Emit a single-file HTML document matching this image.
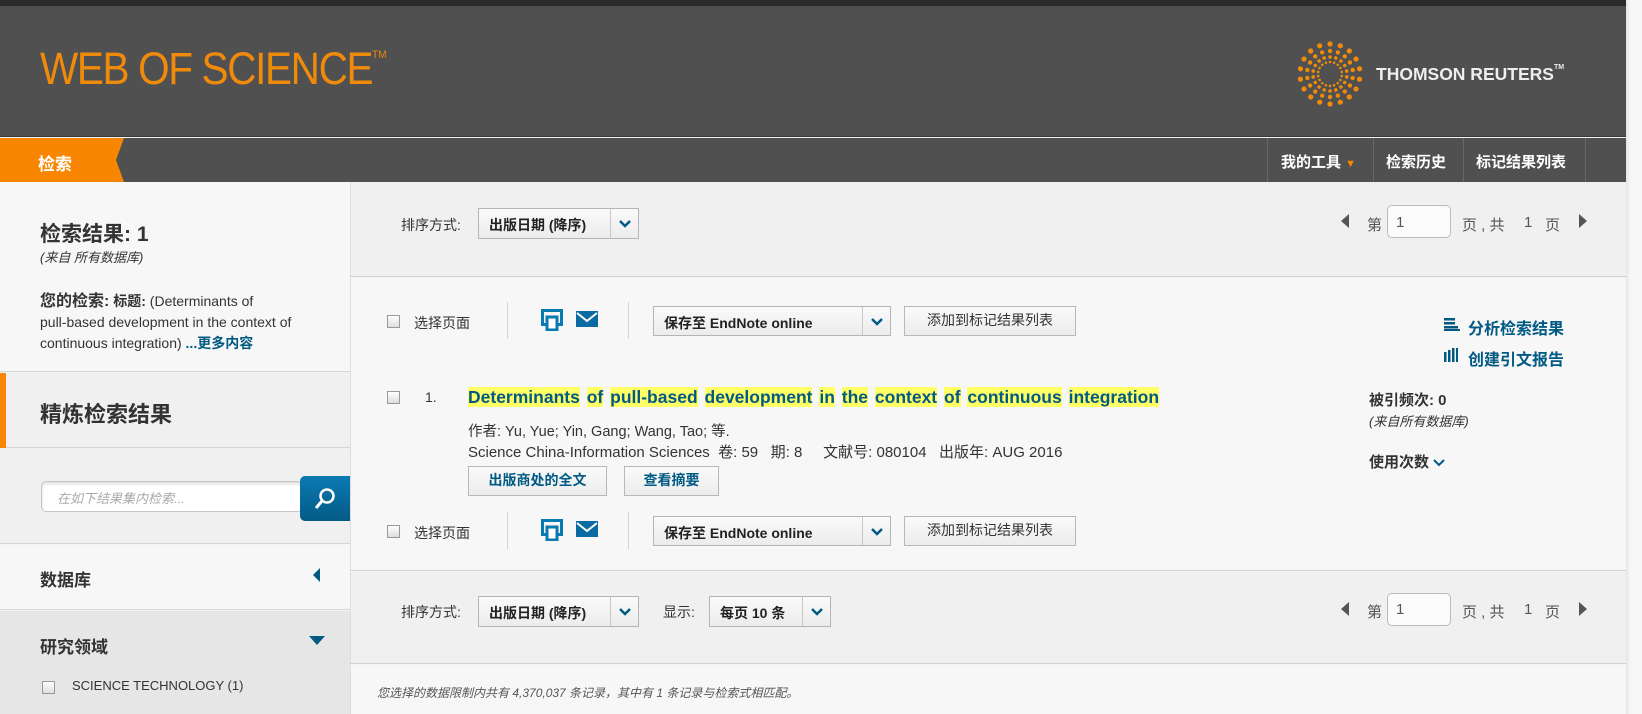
<!DOCTYPE html>
<html><head><meta charset="utf-8"><style>
*{margin:0;padding:0;box-sizing:border-box}
body{width:1642px;height:714px;overflow:hidden;background:#f3f3f3;font-family:"Liberation Sans","Noto Sans CJK SC",sans-serif;color:#333;position:relative;font-size:14px}
.a{position:absolute;white-space:nowrap}
.blue{color:#005a84}
.sel{position:absolute;border:1px solid #b5b5b5;background:linear-gradient(#fafafa,#ececec);font-weight:bold;font-size:14px;color:#222}
.sel .t{position:absolute;left:10px;top:6px}
.sel .d{position:absolute;right:0;top:0;bottom:0;width:28px;border-left:1px solid #c8c8c8}
.btn{position:absolute;border:1px solid #b8b8b8;background:linear-gradient(#fafafa,#ececec);font-size:14px;text-align:center;line-height:27px}
.cb{position:absolute;width:13px;height:13px;border:1px solid #999;background:linear-gradient(#fff,#ddd)}
.vs{position:absolute;width:1px;background:#d4d4d4}
.pg{position:absolute;font-size:15px;color:#555}
</style></head><body>
<div class="a" style="left:0;top:0;width:1626px;height:6px;background:#2b2b2b"></div>
<div class="a" style="left:0;top:6px;width:1626px;height:131px;background:#505050;border-bottom:1px solid #3a3a3a"></div>
<div class="a" style="left:40px;top:43px;font-size:45px;color:#f08a0b;letter-spacing:-1.5px;font-weight:300;transform:scaleX(0.9);transform-origin:left">WEB OF SCIENCE<span style="font-size:11px;vertical-align:top;position:relative;top:6px;letter-spacing:0">TM</span></div>
<svg class="a" style="left:1297px;top:41px" width="66" height="66" viewBox="-33 -33 66 66">
<g fill="#f08a0b">
<g id="r1"><circle cx="0" cy="-30" r="2.6"/><circle cx="0" cy="-23" r="2.2"/><circle cx="0" cy="-17" r="1.8"/><circle cx="0" cy="-12" r="1.3"/></g>
<use href="#r1" transform="rotate(20)"/><use href="#r1" transform="rotate(40)"/><use href="#r1" transform="rotate(60)"/><use href="#r1" transform="rotate(80)"/><use href="#r1" transform="rotate(100)"/><use href="#r1" transform="rotate(120)"/><use href="#r1" transform="rotate(140)"/><use href="#r1" transform="rotate(160)"/><use href="#r1" transform="rotate(180)"/><use href="#r1" transform="rotate(200)"/><use href="#r1" transform="rotate(220)"/><use href="#r1" transform="rotate(240)"/><use href="#r1" transform="rotate(260)"/><use href="#r1" transform="rotate(280)"/><use href="#r1" transform="rotate(300)"/><use href="#r1" transform="rotate(320)"/><use href="#r1" transform="rotate(340)"/>
</g></svg>
<div class="a" style="left:1376px;top:64px;font-size:17.5px;font-weight:bold;color:#eee">THOMSON REUTERS<span style="font-size:7px;vertical-align:top">TM</span></div>
<div class="a" style="left:0;top:138px;width:1626px;height:44px;background:#505050"></div>
<svg class="a" style="left:0;top:138px" width="130" height="44"><polygon points="0,0 124,0 116,22 124,44 0,44" fill="#f98600"/></svg>
<div class="a" style="left:38px;top:150px;font-size:17px;font-weight:bold;color:#fff">检索</div>
<div class="vs" style="left:1267px;top:138px;height:44px;background:#666"></div>
<div class="vs" style="left:1373px;top:138px;height:44px;background:#666"></div>
<div class="vs" style="left:1463px;top:138px;height:44px;background:#666"></div>
<div class="vs" style="left:1585px;top:138px;height:44px;background:#666"></div>
<div class="a" style="left:1281px;top:151px;font-size:15px;font-weight:bold;color:#fff">我的工具 <span style="color:#f98600;font-size:11px">▼</span></div>
<div class="a" style="left:1386px;top:151px;font-size:15px;font-weight:bold;color:#fff">检索历史</div>
<div class="a" style="left:1476px;top:151px;font-size:15px;font-weight:bold;color:#fff">标记结果列表</div>
<div class="a" style="left:0;top:182px;width:350px;height:190px;background:#f7f7f7;border-bottom:1px solid #d6d6d6"></div>
<div class="a" style="left:40px;top:218px;font-size:21px;font-weight:bold;color:#333">检索结果: 1</div>
<div class="a" style="left:40px;top:247px;font-size:13px;font-style:italic">(来自 所有数据库)</div>
<div class="a" style="left:40px;top:291px;font-size:14px;line-height:21px"><b style="font-size:16px">您的检索:</b> <b>标题:</b> (Determinants of<br>pull-based development in the context of<br>continuous integration) <b class="blue">...更多内容</b></div>
<div class="a" style="left:0;top:373px;width:350px;height:75px;background:#f0f0f0;border-bottom:1px solid #d6d6d6"></div>
<div class="a" style="left:0;top:373px;width:6px;height:75px;background:#f98600"></div>
<div class="a" style="left:40px;top:397px;font-size:22px;font-weight:bold">精炼检索结果</div>
<div class="a" style="left:0;top:449px;width:350px;height:95px;background:#f0f0f0;border-bottom:1px solid #d6d6d6"></div>
<div class="a" style="left:41px;top:481px;width:262px;height:31px;border:1px solid #c5c5c5;border-radius:5px;background:#fff;box-shadow:inset 0 2px 3px #ddd"></div>
<div class="a" style="left:57px;top:488px;font-size:13px;font-style:italic;color:#aaa">在如下结果集内检索...</div>
<div class="a" style="left:300px;top:476px;width:50px;height:45px;border-radius:5px 0 0 5px;background:linear-gradient(#0a7ab2,#045a86)"></div>
<svg class="a" style="left:312px;top:486px" width="26" height="26"><circle cx="15" cy="10" r="6.5" fill="none" stroke="#fff" stroke-width="2.5"/><line x1="10" y1="15" x2="4" y2="22" stroke="#fff" stroke-width="3"/></svg>
<div class="a" style="left:0;top:545px;width:350px;height:65px;background:#f7f7f7;border-bottom:1px solid #d6d6d6"></div>
<div class="a" style="left:40px;top:566px;font-size:17px;font-weight:bold">数据库</div>
<svg class="a" style="left:313px;top:568px" width="8" height="14"><polygon points="7,0 7,14 0,7" fill="#005a84"/></svg>
<div class="a" style="left:0;top:611px;width:350px;height:103px;background:#e6e6e6"></div>
<div class="a" style="left:40px;top:633px;font-size:17px;font-weight:bold">研究领域</div>
<svg class="a" style="left:309px;top:636px" width="16" height="10"><polygon points="0,0 16,0 8,9" fill="#005a84"/></svg>
<div class="cb" style="left:42px;top:681px"></div>
<div class="a" style="left:72px;top:678px;font-size:13px">SCIENCE TECHNOLOGY (1)</div>
<div class="a" style="left:350px;top:182px;width:1276px;height:95px;background:#f0f0f0;border-bottom:1px solid #d0d0d0;border-left:1px solid #ddd"></div>
<div class="a" style="left:401px;top:215px;font-size:14px">排序方式:</div>
<div class="sel" style="left:478px;top:208px;width:161px;height:31px"><span class="t">出版日期 (降序)</span><span class="d"><svg width="28" height="29"><polyline points="9,12 14,17 19,12" fill="none" stroke="#005a84" stroke-width="2.5"/></svg></span></div>
<svg class="a" style="left:1341px;top:214px" width="9" height="14"><polygon points="8,0 8,14 0,7" fill="#555"/></svg>
<div class="pg" style="left:1367px;top:214px">第</div>
<div class="a" style="left:1387px;top:205px;width:64px;height:33px;border:1px solid #bbb;border-radius:5px;background:#fbfbfb"></div>
<div class="pg" style="left:1396px;top:214px">1</div>
<div class="pg" style="left:1462px;top:214px">页 , 共</div>
<div class="pg" style="left:1524px;top:214px">1</div>
<div class="pg" style="left:1545px;top:214px">页</div>
<svg class="a" style="left:1579px;top:214px" width="9" height="14"><polygon points="0,0 0,14 8,7" fill="#555"/></svg>
<div class="a" style="left:350px;top:278px;width:1276px;height:293px;background:#f7f7f7;border-bottom:1px solid #d0d0d0;border-left:1px solid #ddd"></div>
<div class="cb" style="left:387px;top:315px"></div>
<div class="a" style="left:414px;top:313px;font-size:14px">选择页面</div>
<div class="vs" style="left:507px;top:302px;height:37px"></div>
<svg class="a" style="left:541px;top:309px" width="22" height="22"><rect x="1.5" y="1.5" width="19" height="14" fill="none" stroke="#0a7ab2" stroke-width="3"/><rect x="6" y="8" width="10" height="13" fill="#fff" stroke="#0a7ab2" stroke-width="3"/><rect x="15" y="3" width="3" height="2" fill="#fff"/></svg>
<svg class="a" style="left:576px;top:311px" width="22" height="18"><rect width="22" height="16" fill="#0a6ba3"/><polyline points="1,2 11,10 21,2" fill="none" stroke="#fff" stroke-width="2"/></svg>
<div class="vs" style="left:628px;top:302px;height:37px"></div>
<div class="sel" style="left:653px;top:306px;width:238px;height:30px"><span class="t">保存至 EndNote online</span><span class="d"><svg width="28" height="28"><polyline points="9,12 14,17 19,12" fill="none" stroke="#005a84" stroke-width="2.5"/></svg></span></div>
<div class="btn" style="left:904px;top:306px;width:172px;height:30px">添加到标记结果列表</div>
<svg class="a" style="left:1444px;top:318px" width="16" height="13"><rect y="0" width="11" height="2.5" fill="#005a84"/><rect y="4" width="11" height="2.5" fill="#005a84"/><rect y="8" width="14" height="2.5" fill="#005a84"/><rect y="11" width="16" height="2" fill="#005a84"/></svg>
<div class="a blue" style="left:1468px;top:315px;font-size:16px;font-weight:bold">分析检索结果</div>
<svg class="a" style="left:1444px;top:348px" width="14" height="14"><rect x="0" y="4" width="2.5" height="10" fill="#005a84"/><rect x="4" y="2" width="2.5" height="12" fill="#005a84"/><rect x="8" y="0" width="2.5" height="14" fill="#005a84"/><rect x="12" y="0" width="2" height="14" fill="#005a84"/></svg>
<div class="a blue" style="left:1468px;top:346px;font-size:16px;font-weight:bold">创建引文报告</div>
<div class="cb" style="left:387px;top:391px"></div>
<div class="a" style="left:425px;top:389px;font-size:14px">1.</div>
<div class="a blue" style="left:468px;top:387px;font-size:17.5px;font-weight:bold;word-spacing:2px">
<span style="background:#ffff66">Determinants</span> <span style="background:#ffff66">of</span> <span style="background:#ffff66">pull-based</span> <span style="background:#ffff66">development</span> <span style="background:#ffff66">in</span> <span style="background:#ffff66">the</span> <span style="background:#ffff66">context</span> <span style="background:#ffff66">of</span> <span style="background:#ffff66">continuous</span> <span style="background:#ffff66">integration</span></div>
<div class="a" style="left:468px;top:420px;font-size:14.5px">作者: Yu, Yue; Yin, Gang; Wang, Tao; 等.</div>
<div class="a" style="left:468px;top:441px;font-size:15px">Science China-Information Sciences &nbsp;卷: 59 &nbsp; 期: 8 &nbsp; &nbsp; 文献号: 080104 &nbsp; 出版年: AUG 2016</div>
<div class="btn blue" style="left:468px;top:466px;width:139px;height:30px;font-weight:bold">出版商处的全文</div>
<div class="btn blue" style="left:624px;top:466px;width:95px;height:30px;font-weight:bold">查看摘要</div>
<div class="a" style="left:1369px;top:389px;font-size:15px;font-weight:bold">被引频次: 0</div>
<div class="a" style="left:1369px;top:411px;font-size:13px;font-style:italic">(来自所有数据库)</div>
<div class="a" style="left:1369px;top:451px;font-size:15px;font-weight:bold">使用次数 <svg width="12" height="8"><polyline points="1,1 6,6 11,1" fill="none" stroke="#005a84" stroke-width="2"/></svg></div>
<div class="cb" style="left:387px;top:525px"></div>
<div class="a" style="left:414px;top:523px;font-size:14px">选择页面</div>
<div class="vs" style="left:507px;top:512px;height:37px"></div>
<svg class="a" style="left:541px;top:519px" width="22" height="22"><rect x="1.5" y="1.5" width="19" height="14" fill="none" stroke="#0a7ab2" stroke-width="3"/><rect x="6" y="8" width="10" height="13" fill="#fff" stroke="#0a7ab2" stroke-width="3"/><rect x="15" y="3" width="3" height="2" fill="#fff"/></svg>
<svg class="a" style="left:576px;top:521px" width="22" height="18"><rect width="22" height="16" fill="#0a6ba3"/><polyline points="1,2 11,10 21,2" fill="none" stroke="#fff" stroke-width="2"/></svg>
<div class="vs" style="left:628px;top:512px;height:37px"></div>
<div class="sel" style="left:653px;top:516px;width:238px;height:30px"><span class="t">保存至 EndNote online</span><span class="d"><svg width="28" height="28"><polyline points="9,12 14,17 19,12" fill="none" stroke="#005a84" stroke-width="2.5"/></svg></span></div>
<div class="btn" style="left:904px;top:516px;width:172px;height:30px">添加到标记结果列表</div>
<div class="a" style="left:350px;top:572px;width:1276px;height:92px;background:#f0f0f0;border-bottom:1px solid #d0d0d0;border-left:1px solid #ddd"></div>
<div class="a" style="left:401px;top:602px;font-size:14px">排序方式:</div>
<div class="sel" style="left:478px;top:596px;width:161px;height:31px"><span class="t">出版日期 (降序)</span><span class="d"><svg width="28" height="29"><polyline points="9,12 14,17 19,12" fill="none" stroke="#005a84" stroke-width="2.5"/></svg></span></div>
<div class="a" style="left:663px;top:602px;font-size:14px">显示:</div>
<div class="sel" style="left:709px;top:596px;width:122px;height:31px"><span class="t">每页 10 条</span><span class="d"><svg width="28" height="29"><polyline points="9,12 14,17 19,12" fill="none" stroke="#005a84" stroke-width="2.5"/></svg></span></div>
<svg class="a" style="left:1341px;top:602px" width="9" height="14"><polygon points="8,0 8,14 0,7" fill="#555"/></svg>
<div class="pg" style="left:1367px;top:601px">第</div>
<div class="a" style="left:1387px;top:593px;width:64px;height:33px;border:1px solid #bbb;border-radius:5px;background:#fbfbfb"></div>
<div class="pg" style="left:1396px;top:601px">1</div>
<div class="pg" style="left:1462px;top:601px">页 , 共</div>
<div class="pg" style="left:1524px;top:601px">1</div>
<div class="pg" style="left:1545px;top:601px">页</div>
<svg class="a" style="left:1579px;top:602px" width="9" height="14"><polygon points="0,0 0,14 8,7" fill="#555"/></svg>
<div class="a" style="left:350px;top:665px;width:1276px;height:49px;background:#f7f7f7;border-left:1px solid #ddd"></div>
<div class="a" style="left:377px;top:684px;font-size:12px;font-style:italic;color:#555">您选择的数据限制内共有 4,370,037 条记录，其中有 1 条记录与检索式相匹配。</div>
<div class="a" style="left:1626px;top:0;width:16px;height:714px;background:linear-gradient(90deg,#e4e4e4,#f6f6f6 4px)"></div>
</body></html>
